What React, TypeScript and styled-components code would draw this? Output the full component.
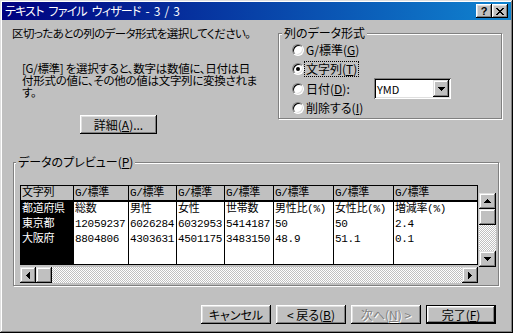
import React from "react";
import styled, { createGlobalStyle, css } from "styled-components";

const GRAY = "#c0c0c0";

const GlobalStyle = createGlobalStyle`
  html, body { margin: 0; padding: 0; background: ${GRAY}; }
  body {
    font-family: "Noto Sans CJK JP", "Noto Sans", sans-serif;
    font-size: 12px;
    color: #000;
    font-feature-settings: "palt";
  }
  * { box-sizing: border-box; }
`;

const raisedButton = css`
  background: ${GRAY};
  box-shadow: inset -1px -1px #000, inset 1px 1px #fff, inset -2px -2px #808080,
    inset 2px 2px #dfdfdf;
`;

const raisedScroll = css`
  background: ${GRAY};
  box-shadow: inset -1px -1px #000, inset 1px 1px #dfdfdf, inset -2px -2px #808080,
    inset 2px 2px #fff;
`;

const Window = styled.div`
  width: 513px;
  height: 333px;
  padding: 2px;
  background: ${GRAY};
  box-shadow: inset -1px -1px #000, inset 1px 1px #dfdfdf, inset -2px -2px #808080,
    inset 2px 2px #fff;
  display: flex;
  flex-direction: column;
  overflow: hidden;
`;

const TitleBar = styled.div`
  height: 18px;
  flex: none;
  display: flex;
  align-items: center;
  padding: 0 3px 0 3px;
  background: linear-gradient(to right, #000080, #1084d0);
  color: #fff;
`;

const Title = styled.div`
  flex: 1;
  line-height: 12px;
  letter-spacing: -0.8px;
  word-spacing: 3px;
  white-space: nowrap;
`;

const CaptionButtons = styled.div`
  display: flex;
  gap: 0;
`;

const CaptionButton = styled.div`
  width: 16px;
  height: 14px;
  display: flex;
  align-items: center;
  justify-content: center;
  color: #000;
  font: bold 11px/11px "Liberation Sans", Arial, sans-serif;
  ${raisedButton};
`;

const Content = styled.div`
  flex: 1;
  display: flex;
  flex-direction: column;
`;

const TopRow = styled.div`
  display: flex;
  align-items: flex-start;
`;

const LeftCol = styled.div`
  width: 276px;
  flex: none;
  padding: 7px 0 0 10px;
  display: flex;
  flex-direction: column;
  align-items: flex-start;
`;

const Instruction = styled.div`
  font-size: 11.5px;
  letter-spacing: -0.6px;
  line-height: 12px;
  height: 12px;
  white-space: nowrap;
`;

const Description = styled.div`
  margin: 23px 0 0 10px;
  font-size: 11.5px;
  letter-spacing: -0.3px;
  line-height: 12px;
  white-space: nowrap;
`;

const PushButton = styled.button<{ $w: number; $default?: boolean }>`
  appearance: none;
  border: none;
  margin: 0;
  padding: 0;
  width: ${(p) => p.$w}px;
  height: 19px;
  font: inherit;
  line-height: 12px;
  color: #000;
  display: flex;
  align-items: center;
  justify-content: center;
  white-space: nowrap;
  ${raisedButton};
  ${(p) =>
    p.$default &&
    css`
      box-shadow: inset 0 0 0 1px #000, inset -2px -2px #000, inset 2px 2px #fff,
        inset -3px -3px #808080, inset 3px 3px #dfdfdf;
    `}
  &:disabled {
    color: #808080;
    text-shadow: 1px 1px 0 #fff;
  }
`;

const DetailButton = styled(PushButton)`
  margin: 17px 0 0 68px;
`;

const GroupBox = styled.div`
  position: relative;
  border: 1px solid #808080;
  box-shadow: 1px 1px 0 #fff, inset 1px 1px 0 #fff;
`;

const GroupLabel = styled.span<{ $left: number }>`
  position: absolute;
  top: -7px;
  left: ${(p) => p.$left}px;
  padding: 0 2px;
  background: ${GRAY};
  line-height: 12px;
  white-space: nowrap;
`;

const FormatGroup = styled(GroupBox)`
  margin-top: 13px;
  width: 224px;
  height: 86px;
  padding: 6px 0 0 13px;
`;

const RadioRow = styled.div`
  height: 19.5px;
  display: flex;
  align-items: center;
`;

const RadioCircle = styled.span<{ $checked?: boolean }>`
  width: 12px;
  height: 12px;
  flex: none;
  border-radius: 50%;
  background: #fff;
  border: 1px solid;
  border-color: #808080 #fff #fff #808080;
  box-shadow: inset 1px 1px #000, inset -1px -1px #dfdfdf;
  display: flex;
  align-items: center;
  justify-content: center;
  &::after {
    content: "";
    width: 4px;
    height: 4px;
    border-radius: 50%;
    background: ${(p) => (p.$checked ? "#000" : "transparent")};
  }
`;

const RadioLabel = styled.span<{ $focus?: boolean; $w?: number }>`
  padding: 1px 1px;
  border: 1px dotted ${(p) => (p.$focus ? "#000" : "transparent")};
  line-height: 12px;
  white-space: nowrap;
  ${(p) => p.$w && `width: ${p.$w}px;`}
`;

const Select = styled.div`
  width: 77px;
  height: 21px;
  flex: none;
  background: #fff;
  box-shadow: inset 1px 1px #808080, inset -1px -1px #fff, inset 2px 2px #000,
    inset -2px -2px #dfdfdf;
  display: flex;
  align-items: center;
  padding: 2px 2px 2px 3px;
`;

const SelectValue = styled.span`
  flex: 1;
  font-size: 11px;
  line-height: 12px;
`;

const ScrollButton = styled.div<{ $w: number; $h: number }>`
  width: ${(p) => p.$w}px;
  height: ${(p) => p.$h}px;
  flex: none;
  display: flex;
  align-items: center;
  justify-content: center;
  ${raisedScroll};
`;

const PreviewGroup = styled(GroupBox)`
  margin: 28px 0 0 11px;
  width: 486px;
  height: 124px;
  padding: 22px 0 0 6px;
`;

const PreviewLayout = styled.div`
  display: grid;
  grid-template-columns: 458px 17px;
  grid-template-rows: 80px 16px;
  column-gap: 1px;
  row-gap: 2px;
`;

const Pane = styled.div`
  grid-column: 1;
  grid-row: 1;
  border: 1px solid #000;
  background: #fff;
  display: flex;
  overflow: hidden;
`;

const Column = styled.div<{ $w: number; $last?: boolean }>`
  ${(p) => (p.$w ? `width: ${p.$w}px; flex: none;` : `flex: 1; min-width: 0;`)}
  border-right: ${(p) => (p.$last ? "none" : "1px solid #000")};
  display: flex;
  flex-direction: column;
  font-family: "Liberation Mono", "Noto Sans CJK JP", monospace;
  font-size: 11px;
  letter-spacing: -0.3px;
  font-feature-settings: normal;
`;

const HeaderCell = styled.div`
  height: 16px;
  flex: none;
  background: ${GRAY};
  border-bottom: 2px solid #000;
  padding-left: 1px;
  line-height: 14px;
  white-space: nowrap;
  overflow: hidden;
`;

const ColumnBody = styled.div<{ $selected?: boolean }>`
  flex: 1;
  background: ${(p) => (p.$selected ? "#000" : "#fff")};
  color: ${(p) => (p.$selected ? "#fff" : "#000")};
`;

const Cell = styled.div`
  height: 15px;
  line-height: 15px;
  padding-left: 1px;
  white-space: nowrap;
  overflow: hidden;
`;

const VScroll = styled.div`
  grid-column: 2;
  grid-row: 1;
  align-self: start;
  margin-top: 8px;
  height: 74px;
  display: flex;
  flex-direction: column;
`;

const HScroll = styled.div`
  grid-column: 1;
  grid-row: 2;
  display: flex;
`;

const Track = styled.div`
  flex: 1;
  background-color: #fff;
  background-image: repeating-conic-gradient(${GRAY} 0 25%, #fff 0 50%);
  background-size: 2px 2px;
`;

const ButtonRow = styled.div`
  margin-top: 19px;
  display: flex;
  justify-content: flex-end;
  gap: 5px;
  padding-right: 15px;
`;

const Arrow = ({ dir }: { dir: "up" | "down" | "left" | "right" }) => {
  const vertical = dir === "up" || dir === "down";
  const paths: Record<string, string> = {
    up: "M3 0h1v1h-1z M2 1h3v1h-3z M1 2h5v1h-5z M0 3h7v1h-7z",
    down: "M0 0h7v1h-7z M1 1h5v1h-5z M2 2h3v1h-3z M3 3h1v1h-1z",
    left: "M3 0h1v7h-1z M2 1h1v5h-1z M1 2h1v3h-1z M0 3h1v1h-1z",
    right: "M0 0h1v7h-1z M1 1h1v5h-1z M2 2h1v3h-1z M3 3h1v1h-1z",
  };
  return (
    <svg
      width={vertical ? 7 : 4}
      height={vertical ? 4 : 7}
      viewBox={vertical ? "0 0 7 4" : "0 0 4 7"}
      shapeRendering="crispEdges"
    >
      <path d={paths[dir]} fill="#000" />
    </svg>
  );
};

const CloseGlyph = () => (
  <svg width="8" height="7" viewBox="0 0 8 7" shapeRendering="crispEdges">
    <path
      d="M0 0h2v1h-2z M6 0h2v1h-2z M1 1h2v1h-2z M5 1h2v1h-2z M2 2h4v1h-4z M3 3h2v1h-2z M2 4h4v1h-4z M1 5h2v1h-2z M5 5h2v1h-2z M0 6h2v1h-2z M6 6h2v1h-2z"
      fill="#000"
    />
  </svg>
);

type Col = { w: number; head: string; cells: string[]; selected?: boolean };

const columns: Col[] = [
  { w: 53, head: "文字列", cells: ["都道府県", "東京都", "大阪府"], selected: true },
  { w: 55, head: "G/標準", cells: ["総数", "12059237", "8804806"] },
  { w: 48, head: "G/標準", cells: ["男性", "6026284", "4303631"] },
  { w: 48, head: "G/標準", cells: ["女性", "6032953", "4501175"] },
  { w: 49, head: "G/標準", cells: ["世帯数", "5414187", "3483150"] },
  { w: 60, head: "G/標準", cells: ["男性比(%)", "50", "48.9"] },
  { w: 60, head: "G/標準", cells: ["女性比(%)", "50", "51.1"] },
  { w: 0, head: "G/標準", cells: ["増減率(%)", "2.4", "0.1"] },
];

export default function App() {
  return (
    <>
      <GlobalStyle />
      <Window>
        <TitleBar>
          <Title>テキスト ファイル ウィザード - 3 / 3</Title>
          <CaptionButtons>
            <CaptionButton>?</CaptionButton>
            <CaptionButton>
              <CloseGlyph />
            </CaptionButton>
          </CaptionButtons>
        </TitleBar>
        <Content>
          <TopRow>
            <LeftCol>
              <Instruction>区切ったあとの列のデータ形式を選択してください。</Instruction>
              <Description>
                [G/標準] を選択すると、数字は数値に、日付は日
                <br />
                付形式の値に、その他の値は文字列に変換されま
                <br />
                す。
              </Description>
              <DetailButton $w={77}>
                詳細(<u>A</u>)...
              </DetailButton>
            </LeftCol>
            <FormatGroup>
              <GroupLabel $left={3}>列のデータ形式</GroupLabel>
              <RadioRow>
                <RadioCircle />
                <RadioLabel>
                  G/標準(<u>G</u>)
                </RadioLabel>
              </RadioRow>
              <RadioRow>
                <RadioCircle $checked />
                <RadioLabel $focus>
                  文字列(<u>T</u>)
                </RadioLabel>
              </RadioRow>
              <RadioRow>
                <RadioCircle />
                <RadioLabel $w={70}>
                  日付(<u>D</u>):
                </RadioLabel>
                <Select>
                  <SelectValue>YMD</SelectValue>
                  <ScrollButton $w={16} $h={17}>
                    <Arrow dir="down" />
                  </ScrollButton>
                </Select>
              </RadioRow>
              <RadioRow>
                <RadioCircle />
                <RadioLabel>
                  削除する(<u>I</u>)
                </RadioLabel>
              </RadioRow>
            </FormatGroup>
          </TopRow>
          <PreviewGroup>
            <GroupLabel $left={2}>
              データのプレビュー(<u>P</u>)
            </GroupLabel>
            <PreviewLayout>
              <Pane>
                {columns.map((c, i) => (
                  <Column key={i} $w={c.w} $last={i === columns.length - 1}>
                    <HeaderCell>{c.head}</HeaderCell>
                    <ColumnBody $selected={c.selected}>
                      {c.cells.map((v, j) => (
                        <Cell key={j}>{v}</Cell>
                      ))}
                    </ColumnBody>
                  </Column>
                ))}
              </Pane>
              <VScroll>
                <ScrollButton $w={17} $h={16}>
                  <Arrow dir="up" />
                </ScrollButton>
                <ScrollButton $w={17} $h={16} />
                <Track />
                <ScrollButton $w={17} $h={16}>
                  <Arrow dir="down" />
                </ScrollButton>
              </VScroll>
              <HScroll>
                <ScrollButton $w={16} $h={16}>
                  <Arrow dir="left" />
                </ScrollButton>
                <ScrollButton $w={16} $h={16} />
                <Track />
                <ScrollButton $w={16} $h={16}>
                  <Arrow dir="right" />
                </ScrollButton>
              </HScroll>
            </PreviewLayout>
          </PreviewGroup>
          <ButtonRow>
            <PushButton $w={70}>キャンセル</PushButton>
            <PushButton $w={70}>
              &lt; 戻る(<u>B</u>)
            </PushButton>
            <PushButton $w={70} disabled>
              次へ(<u>N</u>) &gt;
            </PushButton>
            <PushButton $w={70} $default>
              完了(<u>F</u>)
            </PushButton>
          </ButtonRow>
        </Content>
      </Window>
    </>
  );
}
